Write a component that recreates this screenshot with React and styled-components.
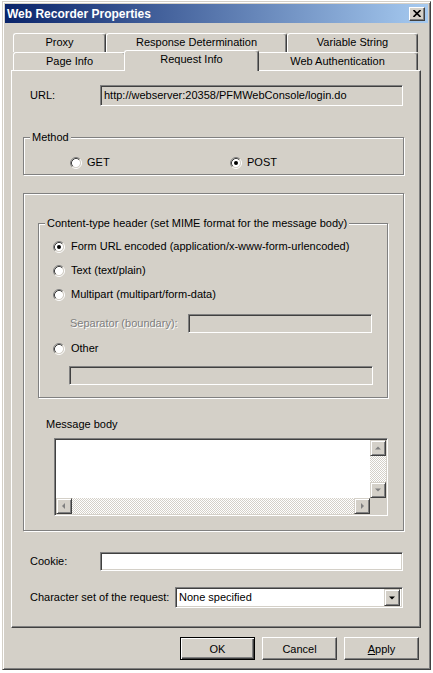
import React from 'react';
import styled, { createGlobalStyle } from 'styled-components';

const GlobalStyle = createGlobalStyle`
  html, body {
    margin: 0;
    padding: 0;
    background: #ffffff;
  }
  body {
    font-family: "Liberation Sans", Arial, sans-serif;
    font-size: 11px;
    color: #000;
  }
`;

const FACE = '#d4d0c8';

const Window = styled.div`
  box-sizing: border-box;
  width: 429px;
  height: 669px;
  margin: 1px 0 0 2px;
  padding: 2px;
  background: ${FACE};
  border: 1px solid;
  border-color: ${FACE} #404040 #404040 ${FACE};
  box-shadow: inset 1px 1px #fff, inset -1px -1px #808080;
  display: flex;
  flex-direction: column;
`;

const TitleBar = styled.div`
  height: 19px;
  flex: none;
  display: flex;
  align-items: center;
  padding-left: 2px;
  background: linear-gradient(to right, #0a246a, #a6caf0);
`;

const TitleText = styled.span`
  flex: 1;
  color: #fff;
  font-weight: bold;
  font-size: 12px;
`;

const CloseButton = styled.div`
  box-sizing: border-box;
  width: 16px;
  height: 14px;
  margin-right: 3px;
  background: ${FACE};
  border: 1px solid;
  border-color: #fff #404040 #404040 #fff;
  box-shadow: inset -1px -1px #808080;
  display: flex;
  align-items: center;
  justify-content: center;
`;

const Body = styled.div`
  padding: 10px 7px 0 6px;
  display: flex;
  flex-direction: column;
`;

const TabStrip = styled.div`
  display: flex;
  flex-direction: column;
  padding-left: 2px;
`;

const TabRow = styled.div`
  display: flex;
  align-items: flex-end;
  height: ${p => p.$h}px;
`;

const Tab = styled.div`
  box-sizing: border-box;
  position: relative;
  width: ${p => (p.$active ? p.$w + 4 : p.$w)}px;
  height: ${p => (p.$active ? p.$h + 3 : p.$h)}px;
  margin: ${p => (p.$active ? '0 -2px -1px -2px' : '0')};
  z-index: ${p => (p.$active ? 1 : 0)};
  background: ${FACE};
  border: 1px solid;
  border-bottom: none;
  border-color: #fff #404040 #404040 #fff;
  border-radius: 3px 3px 0 0;
  box-shadow: inset -1px 0 #808080;
  display: flex;
  justify-content: center;
  padding-top: 2px;
  line-height: 13px;
`;

const Panel = styled.div`
  box-sizing: border-box;
  height: 558px;
  background: ${FACE};
  border: 1px solid;
  border-color: #fff #404040 #404040 #fff;
  box-shadow: inset -1px -1px #808080;
  display: flex;
  flex-direction: column;
  align-items: flex-start;
`;

const Row = styled.div`
  display: flex;
  align-items: center;
  margin-top: ${p => p.$mt || 0}px;
  padding-left: ${p => p.$pl || 0}px;
  line-height: 13px;
`;

const Label = styled.span`
  flex: none;
  width: ${p => (p.$w ? p.$w + 'px' : 'auto')};
  color: ${p => (p.$disabled ? '#808080' : '#000')};
  text-shadow: ${p => (p.$disabled ? '1px 1px #fff' : 'none')};
`;

const Field = styled.div`
  box-sizing: border-box;
  flex: none;
  width: ${p => p.$w}px;
  height: ${p => p.$h || 21}px;
  margin-left: ${p => p.$ml || 0}px;
  margin-top: ${p => p.$mt || 0}px;
  padding: 0 3px;
  background: ${p => (p.$disabled ? FACE : '#fff')};
  border: 1px solid;
  border-color: #808080 #fff #fff #808080;
  box-shadow: inset 1px 1px #404040, inset -1px -1px ${FACE};
  display: flex;
  align-items: center;
  white-space: nowrap;
  overflow: hidden;
`;

const GroupBox = styled.div`
  box-sizing: border-box;
  width: ${p => p.$w}px;
  margin: ${p => p.$mt || 0}px 0 0 ${p => p.$ml || 0}px;
  padding: 0 0 ${p => p.$pb || 0}px ${p => p.$pl || 0}px;
  border: 1px solid #808080;
  box-shadow: inset 1px 1px #fff, 1px 1px #fff;
  display: flex;
  flex-direction: column;
  align-items: flex-start;
`;

const Caption = styled.div`
  margin: -7px 0 0 ${p => 6 - (p.$pl || 0)}px;
  padding: 0 2px;
  background: ${FACE};
  line-height: 13px;
`;

const Option = styled.label`
  display: flex;
  align-items: center;
  gap: ${p => p.$gap || 6}px;
  width: ${p => (p.$w ? p.$w + 'px' : 'auto')};
  line-height: 13px;
`;

const RadioDot = ({ checked }) => (
  <svg width="12" height="12" viewBox="0 0 12 12">
    <circle cx="6" cy="6" r="4.2" fill="#fff" />
    <path d="M2.11 9.89 A5.5 5.5 0 0 1 9.89 2.11" fill="none" stroke="#808080" />
    <path d="M9.89 2.11 A5.5 5.5 0 0 1 2.11 9.89" fill="none" stroke="#fff" />
    <path d="M2.82 9.18 A4.5 4.5 0 0 1 9.18 2.82" fill="none" stroke="#404040" />
    <path d="M9.18 2.82 A4.5 4.5 0 0 1 2.82 9.18" fill="none" stroke={FACE} />
    {checked && <circle cx="6" cy="6" r="2" fill="#000" />}
  </svg>
);

const Radio = ({ checked, children, w, gap }) => (
  <Option $w={w} $gap={gap}>
    <RadioDot checked={checked} />
    <span>{children}</span>
  </Option>
);

const Memo = styled.div`
  box-sizing: border-box;
  width: 334px;
  height: 78px;
  margin: 7px 0 0 30px;
  background: #fff;
  border: 1px solid;
  border-color: #808080 #fff #fff #808080;
  box-shadow: inset 1px 1px #404040, inset -1px -1px ${FACE};
  padding: 1px;
  display: grid;
  grid-template-columns: 1fr 16px;
  grid-template-rows: 1fr 16px;
`;

const ScrollBar = styled.div`
  display: flex;
  flex-direction: ${p => (p.$vertical ? 'column' : 'row')};
`;

const Track = styled.div`
  flex: 1;
  background: repeating-conic-gradient(#fff 0 25%, ${FACE} 0 50%) 0 0 / 2px 2px;
`;

const ArrowButton = styled.div`
  box-sizing: border-box;
  width: 16px;
  height: 16px;
  flex: none;
  background: ${FACE};
  border: 1px solid;
  border-color: ${FACE} #404040 #404040 ${FACE};
  box-shadow: inset 1px 1px #fff, inset -1px -1px #808080;
  display: flex;
  align-items: center;
  justify-content: center;
`;

const Corner = styled.div`
  background: ${FACE};
`;

const ARROWS = {
  up: 'M3 6.5 L6 3.5 L9 6.5 Z',
  down: 'M3 3.5 L9 3.5 L6 6.5 Z',
  left: 'M7 2 L4 5 L7 8 Z',
  right: 'M5 2 L8 5 L5 8 Z',
};

const Arrow = ({ dir, color = '#808080' }) => (
  <svg width="12" height="10" viewBox="0 0 12 10">
    <path d={ARROWS[dir]} fill={color} />
  </svg>
);

const Select = styled.div`
  box-sizing: border-box;
  width: 228px;
  height: 21px;
  padding: 2px 2px 2px 3px;
  background: #fff;
  border: 1px solid;
  border-color: #808080 #fff #fff #808080;
  box-shadow: inset 1px 1px #404040, inset -1px -1px ${FACE};
  display: flex;
  align-items: center;
  white-space: nowrap;
`;

const DropButton = styled(ArrowButton)`
  margin-left: auto;
  height: 17px;
`;

const ButtonBar = styled.div`
  display: flex;
  justify-content: flex-end;
  gap: 7px;
  margin-top: 9px;
  padding-right: 2px;
`;

const Button = styled.div`
  box-sizing: border-box;
  width: 75px;
  height: 23px;
  background: ${FACE};
  border: 1px solid;
  border-color: ${p => (p.$default ? '#000' : '#fff #404040 #404040 #fff')};
  box-shadow: ${p =>
    p.$default
      ? 'inset 1px 1px #fff, inset -1px -1px #404040, inset -2px -2px #808080'
      : 'inset -1px -1px #808080'};
  display: flex;
  align-items: center;
  justify-content: center;
  u {
    text-decoration: underline;
  }
`;

const backTabs = [
  { label: 'Proxy', w: 93 },
  { label: 'Response Determination', w: 181 },
  { label: 'Variable String', w: 131 },
];

const frontTabs = [
  { label: 'Page Info', w: 113 },
  { label: 'Request Info', w: 131, active: true },
  { label: 'Web Authentication', w: 161 },
];

export default function App() {
  return (
    <>
      <GlobalStyle />
      <Window>
        <TitleBar>
          <TitleText>Web Recorder Properties</TitleText>
          <CloseButton>
            <svg width="8" height="7" viewBox="0 0 8 7">
              <path d="M0.5 0 L7.5 7 M7.5 0 L0.5 7" stroke="#000" strokeWidth="1.6" />
            </svg>
          </CloseButton>
        </TitleBar>

        <Body>
          <TabStrip>
            <TabRow $h={19}>
              {backTabs.map(t => (
                <Tab key={t.label} $w={t.w} $h={19}>{t.label}</Tab>
              ))}
            </TabRow>
            <TabRow $h={18}>
              {frontTabs.map(t => (
                <Tab key={t.label} $w={t.w} $h={18} $active={t.active}>{t.label}</Tab>
              ))}
            </TabRow>
          </TabStrip>

          <Panel>
            <Row $mt={14} $pl={18}>
              <Label $w={70}>URL:</Label>
              <Field $w={303} $disabled>http://webserver:20358/PFMWebConsole/login.do</Field>
            </Row>

            <GroupBox $w={381} $mt={31} $ml={11} $pb={5} $pl={46}>
              <Caption $pl={46}>Method</Caption>
              <Row $mt={12}>
                <Radio w={160} gap={5}>GET</Radio>
                <Radio checked gap={5}>POST</Radio>
              </Row>
            </GroupBox>

            <GroupBox $w={381} $mt={18} $ml={11} $pb={14}>
              <GroupBox $w={350} $mt={29} $ml={14} $pb={12} $pl={14}>
                <Caption $pl={14}>Content-type header (set MIME format for the message body)</Caption>
                <Row $mt={10}>
                  <Radio checked>Form URL encoded (application/x-www-form-urlencoded)</Radio>
                </Row>
                <Row $mt={11}>
                  <Radio>Text (text/plain)</Radio>
                </Row>
                <Row $mt={11}>
                  <Radio>Multipart (multipart/form-data)</Radio>
                </Row>
                <Row $mt={13} $pl={17}>
                  <Label $w={118} $disabled>Separator (boundary):</Label>
                  <Field $w={184} $h={19} $disabled />
                </Row>
                <Row $mt={9}>
                  <Radio>Other</Radio>
                </Row>
                <Field $w={304} $h={19} $mt={11} $ml={16} $disabled />
              </GroupBox>

              <Row $mt={20} $pl={22}>
                <Label>Message body</Label>
              </Row>
              <Memo>
                <div />
                <ScrollBar $vertical>
                  <ArrowButton><Arrow dir="up" /></ArrowButton>
                  <Track />
                  <ArrowButton><Arrow dir="down" /></ArrowButton>
                </ScrollBar>
                <ScrollBar>
                  <ArrowButton><Arrow dir="left" /></ArrowButton>
                  <Track />
                  <ArrowButton><Arrow dir="right" /></ArrowButton>
                </ScrollBar>
                <Corner />
              </Memo>
            </GroupBox>

            <Row $mt={21} $pl={18}>
              <Label $w={70}>Cookie:</Label>
              <Field $w={303} $h={19} />
            </Row>

            <Row $mt={16} $pl={18}>
              <Label $w={145}>Character set of the request:</Label>
              <Select>
                None specified
                <DropButton><Arrow dir="down" color="#000" /></DropButton>
              </Select>
            </Row>
          </Panel>

          <ButtonBar>
            <Button $default>OK</Button>
            <Button>Cancel</Button>
            <Button><span><u>A</u>pply</span></Button>
          </ButtonBar>
        </Body>
      </Window>
    </>
  );
}
